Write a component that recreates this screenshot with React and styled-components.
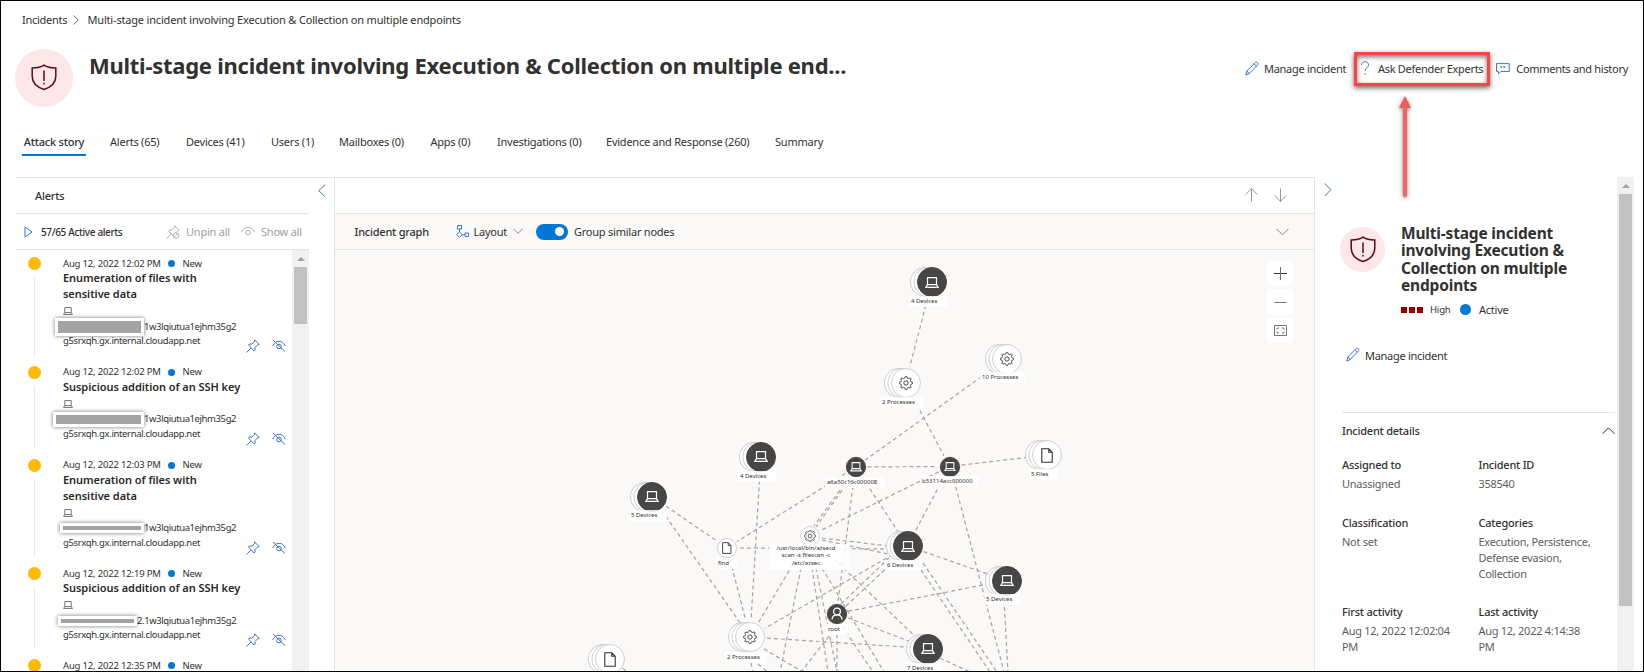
import React from "react";
import styled, { createGlobalStyle, css } from "styled-components";

const Global = createGlobalStyle`
  * { box-sizing: border-box; }
  body { margin: 0; background: #fff; }
`;

const blue = "#3b74c9";
const line = "#e5e5e5";

const body = css`
  font-size: 11px;
  letter-spacing: -0.23px;
  line-height: 16px;
`;
const small = css`
  font-size: 9.5px;
  letter-spacing: -0.18px;
  line-height: 14px;
`;

const Page = styled.div`
  width: 1644px;
  height: 672px;
  border: 1px solid #000;
  background: #fff;
  color: #323130;
  font-family: "Noto Sans", "Open Sans", sans-serif;
  ${body}
  overflow: hidden;
  position: relative;
  display: flex;
  flex-direction: column;
  white-space: nowrap;
`;

const Breadcrumb = styled.nav`
  display: flex;
  align-items: center;
  gap: 8px;
  height: 16px;
  margin: 11px 0 0 21px;
`;
const Crumb = styled.span`
  width: ${(p) => p.$w}px;
  letter-spacing: ${(p) => p.$ls || -0.2}px;
`;

const Header = styled.header`
  display: flex;
  height: 58px;
  margin: 21px 0 0 14px;
`;
const Badge = styled.div`
  width: ${(p) => p.$size}px;
  height: ${(p) => p.$size}px;
  flex: none;
  border-radius: 50%;
  background: #fde7e9;
  display: flex;
  align-items: center;
  justify-content: center;
  padding-bottom: ${(p) => p.$lift || 0}px;
`;
const Title = styled.h1`
  margin: 0 0 0 16px;
  width: 1156px;
  font-size: 22px;
  font-weight: 700;
  letter-spacing: -0.26px;
  line-height: 32px;
`;
const Action = styled.button`
  all: unset;
  ${body}
  letter-spacing: ${(p) => p.$ls || -0.29}px;
  display: flex;
  align-items: center;
  gap: ${(p) => p.$gap || 5}px;
  height: 18px;
  width: ${(p) => p.$w}px;
  margin-top: 11px;
  svg {
    position: relative;
    top: -1px;
  }
`;

const Tabs = styled.nav`
  display: flex;
  gap: 26px;
  height: 26px;
  margin: 24px 0 0 21px;
`;
const Tab = styled.span`
  width: ${(p) => p.$w}px;
  height: 25px;
  padding-top: 3px;
  ${(p) =>
    p.$active &&
    css`
      margin-right: -2px;
      border-bottom: 2px solid #0078d4;
      font-weight: 500;
      text-align: center;
    `}
`;

const Main = styled.main`
  display: flex;
  flex: 1;
  margin-top: 20px;
  margin-left: 14px;
  min-height: 0;
`;

/* Alerts column */
const AlertsPane = styled.section`
  width: 294px;
  display: flex;
  flex-direction: column;
  border-top: 1px solid ${line};
`;
const PaneTitle = styled.div`
  height: 36px;
  padding: 10px 0 0 20px;
  font-weight: 500;
  border-bottom: 1px solid ${line};
`;
const AlertsBar = styled.div`
  height: 36px;
  display: flex;
  align-items: center;
  border-bottom: 1px solid ${line};
  padding-left: 9px;
`;
const Count = styled.span`
  width: 125px;
  margin-left: 8px;
  font-size: 10px;
  font-weight: 500;
  letter-spacing: -0.35px;
`;
const Ghost = styled.span`
  display: flex;
  align-items: center;
  gap: 6px;
  width: ${(p) => p.$w}px;
  color: #a19f9d;
`;
const ListRow = styled.div`
  display: flex;
  flex: 1;
  min-height: 0;
`;
const AlertList = styled.div`
  flex: 1;
  overflow: hidden;
`;
const AlertItem = styled.article`
  display: flex;
  height: ${(p) => p.$h}px;
  padding: 7px 0 0 13px;
`;
const Rail = styled.div`
  width: 13px;
  margin-right: 14px;
  display: flex;
  flex-direction: column;
  align-items: center;
`;
const Severity = styled.i`
  width: 13px;
  height: 13px;
  flex: none;
  border-radius: 50%;
  background: #ffb900;
`;
const RailLine = styled.i`
  width: 1px;
  flex: 1;
  margin: 7px 0 3px;
  background: #e8e8e8;
`;
const AlertBody = styled.div`
  width: 224px;
  padding-left: 8px;
`;
const Stamp = styled.div`
  ${small}
  height: 13px;
  display: flex;
  align-items: center;
`;
const StampText = styled.span`
  width: 104.5px;
`;
const Dot = styled.i`
  width: ${(p) => p.$s}px;
  height: ${(p) => p.$s}px;
  border-radius: 50%;
  background: #0078d4;
  margin-right: ${(p) => p.$mr}px;
  flex: none;
`;
const AlertTitle = styled.div`
  font-weight: 600;
  line-height: 16px;
  letter-spacing: -0.05px;
  color: #292827;
`;
const LaptopLine = styled.div`
  height: 17px;
  padding-top: 5px;
  line-height: 0;
`;
const DeviceLine = styled.div`
  ${small}
  letter-spacing: -0.4px;
  height: 15px;
  display: flex;
  align-items: center;
  margin-left: ${(p) => p.$ml}px;
`;
const Redaction = styled.i`
  width: ${(p) => p.$w}px;
  height: ${(p) => p.$h}px;
  flex: none;
  border: 3px solid #fff;
  background: #a3a3a3;
  box-shadow: 0 0 4px rgba(0, 0, 0, 0.55);
  z-index: 1;
`;
const HostRow = styled.div`
  ${small}
  letter-spacing: -0.35px;
  display: flex;
  gap: 12px;
`;
const HostName = styled.span`
  width: 171px;
  flex: none;
`;
const AlertActions = styled.span`
  display: flex;
  gap: 12px;
  margin-top: 5px;
`;

const ScrollTrack = styled.div`
  width: 17px;
  background: #f1f1f1;
  display: flex;
  flex-direction: column;
  align-items: center;
  flex: none;
`;
const ScrollArrow = styled.i`
  margin: 7px 0 6px;
  border: 4px solid transparent;
  border-top: 0;
  border-bottom: 4px solid #a0a0a0;
`;
const Thumb = styled.div`
  width: 13px;
  height: ${(p) => p.$h}px;
  background: #c1c1c1;
`;

const Gutter = styled.div`
  width: 25px;
  border-top: 1px solid ${line};
  padding: 6px 0 0 9px;
`;

/* Graph column */
const GraphPane = styled.section`
  width: 981px;
  border: 1px solid ${line};
  border-bottom: 0;
  display: flex;
  flex-direction: column;
`;
const NavBar = styled.div`
  height: 36px;
  display: flex;
  justify-content: flex-end;
  align-items: center;
  gap: 16px;
  padding: 0 27px 2px 0;
  border-bottom: 1px solid ${line};
`;
const Toolbar = styled.div`
  height: 36px;
  background: #faf9f8;
  border-bottom: 1px solid ${line};
  display: flex;
  align-items: center;
  padding-left: 19.5px;
`;
const ToolText = styled.span`
  width: ${(p) => p.$w}px;
  margin-left: ${(p) => p.$ml || 0}px;
  font-weight: ${(p) => p.$weight || 400};
`;
const Toggle = styled.span`
  width: 32px;
  height: 16px;
  margin: 0 6px 0 13px;
  padding: 0 4px;
  border-radius: 8px;
  background: #0078d4;
  display: flex;
  align-items: center;
  justify-content: flex-end;
`;
const Knob = styled.i`
  width: 9px;
  height: 9px;
  border-radius: 50%;
  background: #fff;
`;
const Canvas = styled.div`
  flex: 1;
  background: #faf9f8;
  position: relative;
  overflow: hidden;
`;
const EdgeLayer = styled.svg`
  position: absolute;
  left: 0;
  top: 0;
`;
const NodeSpot = styled.div`
  position: absolute;
  left: ${(p) => p.$x - p.$r - 335}px;
  top: ${(p) => p.$y - p.$r - 250}px;
`;
const Disc = styled.div`
  width: ${(p) => p.$r * 2}px;
  height: ${(p) => p.$r * 2}px;
  border-radius: 50%;
  border: 1px solid ${(p) => (p.$dark ? "#484644" : "#d2d0ce")};
  background: ${(p) => (p.$dark ? "#484644" : "#fff")};
  display: flex;
  align-items: center;
  justify-content: center;
  box-shadow: ${(p) =>
    p.$stack
      ? "-3.5px 0 0 -1px #fff, -3.5px 0 0 0 #d2d0ce, -7px 0 0 -1px #fff, -7px 0 0 0 #d2d0ce"
      : p.$dark
        ? "0 0 0 0.5px #d2d0ce"
        : "none"};
`;
const NodeLabel = styled.div`
  position: absolute;
  left: ${(p) => p.$x - 335}px;
  top: ${(p) => p.$y - 255.5}px;
  width: ${(p) => p.$w}px;
  padding: ${(p) => (p.$center ? "1px 8px 2px 1px" : "1px 2px 2px")};
  background: rgba(255, 255, 255, 0.85);
  font-size: 6px;
  letter-spacing: 0;
  line-height: ${(p) => (p.$center ? 7.7 : 8)}px;
  color: #323130;
  text-align: ${(p) => (p.$center ? "center" : "left")};
  white-space: pre;
`;
const ZoomStack = styled.div`
  position: absolute;
  right: 21px;
  top: 11px;
  display: flex;
  flex-direction: column;
  gap: 3px;
`;
const ZoomButton = styled.button`
  all: unset;
  width: 26px;
  height: ${(p) => p.$h || 25}px;
  border-radius: 2px;
  background: #fff;
  display: flex;
  align-items: center;
  justify-content: center;
`;

/* Details column */
const Details = styled.aside`
  width: 302px;
  padding-left: 9px;
`;
const CollapseRow = styled.div`
  height: 19px;
  padding-top: 6px;
  line-height: 0;
`;
const DetailsHead = styled.div`
  display: flex;
  margin: 31px 0 0 16px;
`;
const HeadText = styled.div`
  margin-left: 16px;
`;
const DetailsTitle = styled.h2`
  margin: -2px 0 0;
  font-size: 15.5px;
  font-weight: 700;
  line-height: 17.4px;
  letter-spacing: -0.18px;
  white-space: pre-line;
`;
const Status = styled.div`
  display: flex;
  align-items: center;
  margin-top: 7px;
  height: 16px;
`;
const Square = styled.i`
  width: 6px;
  height: 6px;
  background: #990000;
  margin-right: 2px;
`;
const High = styled.span`
  ${small}
  width: 30px;
  margin-left: 5px;
`;
const ManageRow = styled.div`
  display: flex;
  align-items: flex-start;
  height: 76px;
  margin: 18px 0 0 22px;
`;
const SectionHead = styled.div`
  width: 273px;
  height: 37px;
  margin-left: 18px;
  border-top: 1px solid ${line};
  display: flex;
  align-items: center;
  justify-content: space-between;
  font-weight: 500;
`;
const FieldGrid = styled.dl`
  margin: 8px 0 0 18px;
  display: grid;
  grid-template-columns: 136.5px 130px;
  grid-template-rows: 58px 89px 60px;
`;
const Field = styled.div``;
const Term = styled.dt`
  font-weight: 500;
  line-height: 16px;
  margin-bottom: 3px;
`;
const Value = styled.dd`
  margin: 0;
  color: #605e5c;
  white-space: pre-line;
  letter-spacing: -0.28px;
`;

/* Callout laid over the page */
const Highlight = styled.div`
  position: absolute;
  left: 1353px;
  top: 51px;
  width: 136px;
  height: 34px;
  border: 3px solid #ff4343;
  box-shadow: 0 2px 5px rgba(0, 0, 0, 0.6), inset 0 2px 5px rgba(0, 0, 0, 0.55);
`;
const Pointer = styled.svg`
  position: absolute;
  left: 1391px;
  top: 91px;
  filter: drop-shadow(0 1px 2px rgba(0, 0, 0, 0.5));
`;

const Stroke = ({ w = 14, h = 14, c = blue, sw = 1, children, vb }) => (
  <svg width={w} height={h} viewBox={vb || `0 0 ${w} ${h}`} fill="none" stroke={c} strokeWidth={sw}>
    {children}
  </svg>
);

const Shield = () => (
  <Stroke w={26} h={27} c="#5c0a10" sw={1.5}>
    <path d="M13 1.2C10.5 3 5.5 4 1.2 4v8.300C1.200 18.500 5.500 23 13 25.500c7.500-2.500 11.800-7 11.800-13.200V4C20.500 4 15.500 3 13 1.200z" />
    <path d="M13 6.500v10.500M13 18.800v1.700" />
  </Stroke>
);
const Pencil = () => (
  <Stroke w={14} h={15}>
    <path d="M.8 14l1-4L10 1.700C11.600.2 14 2.400 12.400 4.100L4.200 12.600zM9 2.800l2.600 2.600M1.800 10l2.400 2.600" />
  </Stroke>
);
const Question = () => (
  <Stroke w={11} h={14} sw={1}>
    <path d="M2.500 4C2.500-.3 9.500-.2 9.500 3.800c0 3-3.500 3-3.500 6.200M6 12v1.500" />
  </Stroke>
);
const Comment = () => (
  <Stroke w={14} h={13}>
    <path d="M.5 1.500h13v8H5l-2.500 2.500V9.500h-2z" />
    <path d="M4.500 5h1.700M7.500 5h1.700" strokeWidth="1.600" />
  </Stroke>
);
const Chevron = ({ dir, c = "#605e5c", s = 6, sw = 1 }) => {
  const d = {
    left: `M${s + 1} .5L.8 ${s + 0.5}l${s + 0.2} ${s}`,
    right: `M.8 .5l${s} ${s}l-${s} ${s}`,
    down: `M.5 .8l${s} ${s}l${s}-${s}`,
    up: `M.5 ${s + 0.8}l${s}-${s}l${s} ${s}`,
  }[dir];
  const tall = dir === "left" || dir === "right";
  return (
    <Stroke w={tall ? s + 2 : s * 2 + 1} h={tall ? s * 2 + 1 : s + 2} c={c} sw={sw}>
      <path d={d} />
    </Stroke>
  );
};
const Pin = ({ c = blue, off }) => (
  <Stroke w={14} h={14} c={c}>
    <path d="M8.500.8l4.700 4.700-1.500.3-2.700 2.700.1 2.500-1 1L2.500 6l1-1 2.500.1L8.700 2.300zM5 9L.5 13.500" />
    {off && <circle cx="10" cy="10.500" r="2.800" fill="#fff" />}
    {off && <path d="M8 12.500l4-4" />}
  </Stroke>
);
const Eye = ({ c = blue, off }) => (
  <Stroke w={14} h={13} c={c}>
    <path d="M.7 7C2.500 3.500 4.500 2.300 7 2.300s4.500 1.200 6.300 4.700" />
    <circle cx="7" cy="7.500" r="2.300" />
    {off && <path d="M1 1l12 11.500" />}
  </Stroke>
);
const Play = () => (
  <Stroke w={9} h={12}>
    <path d="M1 1l7.200 5L1 11z" />
  </Stroke>
);
const LayoutIcon = () => (
  <Stroke w={13} h={13}>
    <path d="M1.500.500h4v3.500h-4zM3.500 4v3M3.500 7L6.300 9.700 3.500 12.300.7 9.700zM6.300 9.700h2.700M9 8h3.500v3.500H9z" />
  </Stroke>
);
const Arrow = ({ down }) => (
  <Stroke w={13} h={14} c="#979593">
    <path d={down ? "M6.500.5v13M.7 7.500l5.800 5.800 5.800-5.800" : "M6.500 13.500V.7M.7 6.500L6.500.7l5.800 5.800"} />
  </Stroke>
);
const Laptop = ({ w = 14, h = 11, c = "#fff", sw = 1 }) => (
  <Stroke w={w} h={h} vb="0 0 14 11" c={c} sw={sw}>
    <path d="M2.500.700h9v7h-9zM2.500 7.700L.8 10.300h12.400L11.500 7.700" />
  </Stroke>
);
const cog = Array.from({ length: 32 }, (_, i) => {
  const r = i % 4 < 2 ? 6.6 : 5;
  const a = ((i - 0.5) * Math.PI) / 16;
  return `${(7 + r * Math.cos(a)).toFixed(2)} ${(7 + r * Math.sin(a)).toFixed(2)}`;
}).join("L");
const Gear = ({ s }) => (
  <Stroke w={s} h={s} vb="0 0 14 14" c="#484644" sw={1}>
    <path d={`M${cog}Z`} />
    <circle cx="7" cy="7" r="2.200" />
  </Stroke>
);
const FileIcon = ({ s }) => (
  <Stroke w={s * 0.8} h={s} vb="0 0 12 15" c="#323130" sw={1.1}>
    <path d="M.8.800h7l3.400 3.500v10H.8zM7.800.800v3.500h3.400" />
  </Stroke>
);
const Person = () => (
  <Stroke w={12} h={13} c="#fff" sw={1.3}>
    <circle cx="6" cy="4.500" r="3.400" />
    <path d="M1 12.500c.3-3 2-4.600 5-4.600s4.700 1.600 5 4.600" />
  </Stroke>
);

const nodes = {
  a: { x: 932, y: 282, k: "dev", t: "4 Devices", lx: 909, ly: 301, lw: 38 },
  b: { x: 905.5, y: 383, k: "proc", t: "2 Processes", lx: 880, ly: 402, lw: 43 },
  c: { x: 1007, y: 358.5, k: "proc", t: "10 Processes", lx: 980, ly: 377, lw: 45 },
  d: { x: 855.5, y: 467, k: "dev", s: 1, t: "a6a50c16c000008", lx: 825, ly: 482, lw: 60 },
  e: { x: 949.5, y: 466.5, k: "dev", s: 1, t: "b53114acc000000", lx: 920, ly: 481, lw: 59 },
  f: { x: 1047, y: 455, k: "file", t: "5 Files", lx: 1029, ly: 474, lw: 29 },
  g: { x: 761, y: 456.5, k: "dev", t: "4 Devices", lx: 738, ly: 476, lw: 38 },
  h: { x: 652, y: 496.5, k: "dev", t: "5 Devices", lx: 629, ly: 515, lw: 38 },
  i: { x: 727, y: 548, k: "file", s: 1, t: "find", lx: 716, ly: 563, lw: 22 },
  j: { x: 809.5, y: 536, k: "proc", s: 1, t: "/usr/local/bin/azsecd\nscan -s filescan -c\n/etc/azsec", lx: 769, ly: 549, lw: 81, center: 1 },
  k: { x: 907.5, y: 546, k: "dev", t: "6 Devices", lx: 885, ly: 565, lw: 36 },
  l: { x: 1006.5, y: 580.5, k: "dev", t: "5 Devices", lx: 984, ly: 599, lw: 37 },
  m: { x: 836.5, y: 613.5, k: "user", s: 1, t: "root", lx: 826, ly: 629, lw: 22 },
  n: { x: 750, y: 637, k: "proc", t: "2 Processes", lx: 725, ly: 657, lw: 42 },
  o: { x: 609.5, y: 659, k: "file" },
  p: { x: 928, y: 648.5, k: "dev", t: "7 Devices", lx: 905, ly: 668, lw: 37 },
};

const links = "ab cd be de ef hi hn di in gn dm dk ej ek jn jp kn np ml mp kl".split(" ");
const strays = [
  [740, 548, 890, 549],
  [848, 479, 814, 526],
  [850, 479, 816, 527],
  [822, 538, 888, 546],
  [822, 540, 888, 554],
  [841, 604, 889, 558],
  [846, 606, 893, 562],
  [954, 480, 1004, 672],
  [1004, 600, 1008, 672],
  [801, 568, 780, 672],
  [812, 568, 828, 672],
  [816, 568, 837, 672],
  [822, 568, 884, 672],
  [842, 626, 873, 672],
  [837, 634, 837, 672],
  [829, 636, 801, 672],
  [764, 649, 803, 672],
  [751, 663, 753, 672],
  [758, 664, 768, 672],
  [917, 564, 990, 672],
  [923, 563, 997, 672],
  [940, 658, 970, 672],
  [623, 668, 627, 673],
];

function trimmed([p, q]) {
  const a = nodes[p];
  const b = nodes[q];
  const dx = b.x - a.x;
  const dy = b.y - a.y;
  const len = Math.hypot(dx, dy);
  const ra = (a.s ? 12 : 17) / len;
  const rb = (b.s ? 12 : 17) / len;
  return [a.x + dx * ra, a.y + dy * ra, b.x - dx * rb, b.y - dy * rb];
}

const edges = [...links.map(trimmed), ...strays];

function Node({ n }) {
  const r = n.s ? 10 : 15;
  const dark = n.k === "dev" || n.k === "user";
  return (
    <>
      <NodeSpot $x={n.x} $y={n.y} $r={r}>
        <Disc $r={r} $dark={dark} $stack={!n.s}>
          {n.k === "dev" && <Laptop w={n.s ? 12 : 14} h={n.s ? 9.5 : 11} sw={1.2} />}
          {n.k === "proc" && <Gear s={n.s ? 12 : 14} />}
          {n.k === "file" && <FileIcon s={n.s ? 12 : 15} />}
          {n.k === "user" && <Person />}
        </Disc>
      </NodeSpot>
      {n.t && (
        <NodeLabel $x={n.lx} $y={n.ly} $w={n.lw} $center={n.center}>
          {n.t}
        </NodeLabel>
      )}
    </>
  );
}

const tabs = [
  ["Attack story", 64],
  ["Alerts (65)", 50],
  ["Devices (41)", 59],
  ["Users (1)", 42],
  ["Mailboxes (0)", 65.5],
  ["Apps (0)", 40.5],
  ["Investigations (0)", 83],
  ["Evidence and Response (260)", 143],
  ["Summary", 50],
];

const alerts = [
  { time: "12:02", title: ["Enumeration of files with", "sensitive data"], h: 108.5, rw: 89, rh: 18, ml: -8, host: "1w3lqiutua1ejhm35g2" },
  { time: "12:02", title: ["Suspicious addition of an SSH key"], h: 93, rw: 91, rh: 15, ml: -10, host: "1w3lqiutua1ejhm35g2" },
  { time: "12:03", title: ["Enumeration of files with", "sensitive data"], h: 108.5, rw: 84, rh: 10, ml: -3, host: "1w3lqiutua1ejhm35g2" },
  { time: "12:19", title: ["Suspicious addition of an SSH key"], h: 92, rw: 79, rh: 10, ml: -5, host: "2.1w3lqiutua1ejhm35g2" },
  { time: "12:35", title: [], h: 93 },
];

const fields = [
  ["Assigned to", "Unassigned"],
  ["Incident ID", "358540"],
  ["Classification", "Not set"],
  ["Categories", "Execution, Persistence,\nDefense evasion,\nCollection"],
  ["First activity", "Aug 12, 2022 12:02:04\nPM"],
  ["Last activity", "Aug 12, 2022 4:14:38\nPM"],
];

function Alert({ a }) {
  return (
    <AlertItem $h={a.h}>
      <Rail>
        <Severity />
        <RailLine />
      </Rail>
      <AlertBody>
        <Stamp>
          <StampText>Aug 12, 2022 {a.time} PM</StampText>
          <Dot $s={7} $mr={8} />
          New
        </Stamp>
        {a.title.map((t) => (
          <AlertTitle key={t}>{t}</AlertTitle>
        ))}
        {a.host && (
          <>
            <LaptopLine>
              <Laptop w={10} h={8} c="#605e5c" sw={1.2} />
            </LaptopLine>
            <DeviceLine $ml={a.ml}>
              <Redaction $w={a.rw} $h={a.rh} />
              {a.host}
            </DeviceLine>
            <HostRow>
              <HostName>g5srxqh.gx.internal.cloudapp.net</HostName>
              <AlertActions>
                <Pin />
                <Eye off />
              </AlertActions>
            </HostRow>
          </>
        )}
      </AlertBody>
    </AlertItem>
  );
}

export default function App() {
  return (
    <Page>
      <Global />
      <Breadcrumb>
        <Crumb $w={43} $ls={-0.28}>
          Incidents
        </Crumb>
        <Chevron dir="right" s={4.5} />
        <Crumb $w={380} $ls={-0.18}>
          Multi-stage incident involving Execution &amp; Collection on multiple endpoints
        </Crumb>
      </Breadcrumb>
      <Header>
        <Badge $size={58} $lift={2}>
          <Shield />
        </Badge>
        <Title>Multi-stage incident involving Execution &amp; Collection on multiple end...</Title>
        <Action $w={114}>
          <Pencil />
          Manage incident
        </Action>
        <Action $w={137} $gap={8}>
          <Question />
          Ask Defender Experts
        </Action>
        <Action $w={132} $gap={6.5}>
          <Comment />
          Comments and history
        </Action>
      </Header>
      <Tabs>
        {tabs.map(([t, w], i) => (
          <Tab key={t} $w={w} $active={i === 0}>
            {t}
          </Tab>
        ))}
      </Tabs>
      <Main>
        <AlertsPane>
          <PaneTitle>Alerts</PaneTitle>
          <AlertsBar>
            <Play />
            <Count>57/65 Active alerts</Count>
            <Ghost $w={75}>
              <Pin c="#b3b0ad" off />
              Unpin all
            </Ghost>
            <Ghost $w={64}>
              <Eye c="#b3b0ad" />
              Show all
            </Ghost>
          </AlertsBar>
          <ListRow>
            <AlertList>
              {alerts.map((a, i) => (
                <Alert key={i} a={a} />
              ))}
            </AlertList>
            <ScrollTrack>
              <ScrollArrow />
              <Thumb $h={57} />
            </ScrollTrack>
          </ListRow>
        </AlertsPane>
        <Gutter>
          <Chevron dir="left" c={blue} s={6.2} />
        </Gutter>
        <GraphPane>
          <NavBar>
            <Arrow />
            <Arrow down />
          </NavBar>
          <Toolbar>
            <ToolText $w={101} $weight={500}>
              Incident graph
            </ToolText>
            <LayoutIcon />
            <ToolText $w={39.5} $ml={5}>
              Layout
            </ToolText>
            <Chevron dir="down" s={4.5} c="#8a8886" />
            <Toggle>
              <Knob />
            </Toggle>
            <ToolText $w={702}>Group similar nodes</ToolText>
            <Chevron dir="down" s={6} c="#8a8886" />
          </Toolbar>
          <Canvas>
            <EdgeLayer width="979" height="422" viewBox="335 250 979 422">
              {edges.map(([x1, y1, x2, y2], i) => (
                <line key={i} x1={x1} y1={y1} x2={x2} y2={y2} stroke="#a6a4a2" strokeWidth="1.2" strokeDasharray="4 3" />
              ))}
            </EdgeLayer>
            {Object.entries(nodes).map(([id, n]) => (
              <Node key={id} n={n} />
            ))}
            <ZoomStack>
              <ZoomButton>
                <Stroke w={13} h={13} c="#323130">
                  <path d="M0 6.500h13" />
                  <path d="M6.500 0v13" stroke="#6a66a8" />
                </Stroke>
              </ZoomButton>
              <ZoomButton $h={26}>
                <Stroke w={13} h={11} c="#797775">
                  <path d="M.5 5.500h12" />
                </Stroke>
              </ZoomButton>
              <ZoomButton>
                <Stroke w={13} h={11} c="#797775">
                  <path d="M.5.500h12v10H.5z" />
                  <path d="M3 4.500V3h2M8 3h2v1.500M10 6.500V8H8M5 8H3V6.500" />
                </Stroke>
              </ZoomButton>
            </ZoomStack>
          </Canvas>
        </GraphPane>
        <Details>
          <CollapseRow>
            <Chevron dir="right" c={blue} s={6.2} />
          </CollapseRow>
          <DetailsHead>
            <Badge $size={45} $lift={1}>
              <Shield />
            </Badge>
            <HeadText>
              <DetailsTitle>{"Multi-stage incident\ninvolving Execution &\nCollection on multiple\nendpoints"}</DetailsTitle>
              <Status>
                <Square />
                <Square />
                <Square />
                <High>High</High>
                <Dot $s={11} $mr={8} />
                Active
              </Status>
            </HeadText>
          </DetailsHead>
          <ManageRow>
            <Action>
              <Pencil />
              Manage incident
            </Action>
          </ManageRow>
          <SectionHead>
            Incident details
            <Chevron dir="up" c="#323130" s={6} />
          </SectionHead>
          <FieldGrid>
            {fields.map(([k, v]) => (
              <Field key={k}>
                <Term>{k}</Term>
                <Value>{v}</Value>
              </Field>
            ))}
          </FieldGrid>
        </Details>
        <ScrollTrack>
          <ScrollArrow />
          <Thumb $h={412} />
        </ScrollTrack>
      </Main>
      <Highlight />
      <Pointer width="26" height="110" viewBox="0 0 26 110">
        <path d="M13 16v87" stroke="#f16464" strokeWidth="4" strokeLinecap="round" />
        <path d="M13 4l6 12H7z" fill="#ee5c5c" />
      </Pointer>
    </Page>
  );
}
